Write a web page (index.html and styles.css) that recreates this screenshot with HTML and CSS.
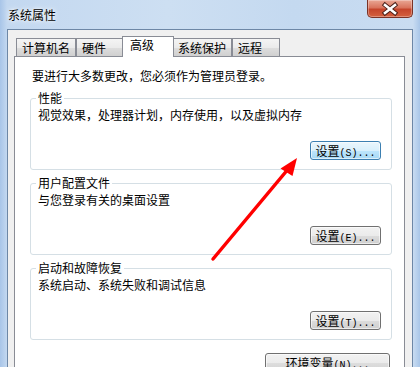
FILE: index.html
```html
<!DOCTYPE html>
<html lang="zh-CN">
<head>
<meta charset="UTF-8">
<meta name="viewport" content="width=device-width, initial-scale=1.0">
<title>系统属性</title>
<link rel="stylesheet" href="styles.css">
</head>
<body>
<div class="window">
  <div class="titlebar">
    <span class="title">系统属性</span>
    <div class="close">
      <svg width="44" height="18" viewBox="0 0 44 18">
        <path d="M17 5 L27 13 M27 5 L17 13" stroke="#4a1f18" stroke-width="4.5" stroke-linecap="square" fill="none"/>
        <path d="M17 5 L27 13 M27 5 L17 13" stroke="#fff" stroke-width="2.6" stroke-linecap="square" fill="none"/>
      </svg>
    </div>
  </div>
  <div class="dialog">
    <div class="tabs">
      <div class="tab">计算机名</div>
      <div class="tab">硬件</div>
      <div class="tab active">高级</div>
      <div class="tab">系统保护</div>
      <div class="tab">远程</div>
    </div>
    <div class="panel">
      <p class="intro">要进行大多数更改，您必须作为管理员登录。</p>
      <fieldset class="group">
        <legend>性能</legend>
        <p>视觉效果，处理器计划，内存使用，以及虚拟内存</p>
        <div class="actions"><button class="btn focused">设置<span class="key">(S)...</span></button></div>
      </fieldset>
      <fieldset class="group">
        <legend>用户配置文件</legend>
        <p>与您登录有关的桌面设置</p>
        <div class="actions"><button class="btn">设置<span class="key">(E)...</span></button></div>
      </fieldset>
      <fieldset class="group">
        <legend>启动和故障恢复</legend>
        <p>系统启动、系统失败和调试信息</p>
        <div class="actions"><button class="btn">设置<span class="key">(T)...</span></button></div>
      </fieldset>
      <div class="actions env"><button class="btn wide">环境变量<span class="key">(N)...</span></button></div>
    </div>
  </div>
  <!-- red annotation arrow drawn over the dialog -->
  <svg class="arrow" width="420" height="367" viewBox="0 0 420 367">
    <line x1="213" y1="259" x2="289" y2="168" stroke="#f00" stroke-width="3.5" stroke-linecap="round"/>
    <polygon points="297,158 280.5,168.5 292.5,176" fill="#f00"/>
  </svg>
</div>
</body>
</html>
```

FILE: styles.css
```css
html, body { margin: 0; padding: 0; height: 367px; overflow: hidden; }
body { font-family: "Noto Sans CJK SC", "Noto Sans", sans-serif; font-size: 12px; color: #000; }

.window { position: relative; height: 367px; box-sizing: border-box; padding: 0 7px; background: linear-gradient(90deg, #a8c5e8 0, #c3d8f0 7px, #cddff2 40%, #c4d9f0 70%, #c9dcf1 calc(100% - 7px), #a9c6e8 100%); }

.titlebar { height: 29px; display: flex; justify-content: space-between; align-items: flex-start; padding-left: 1px; }
.title { margin-top: 7px; line-height: 16px; text-shadow: 0 0 6px #fff, 0 0 3px #fff; }
.close { width: 46px; height: 18px; box-sizing: border-box; border: 1px solid #7a3226; border-top: none; border-radius: 0 0 5px 5px; background: linear-gradient(#e9a795, #d9745d 45%, #c5452c 55%, #d4603f); box-shadow: inset 0 0 0 1px rgba(255, 255, 255, 0.3); }
.close svg { display: block; }

.dialog { height: 338px; background: #f0f0f0; border: 1px solid #6d87a6; border-bottom: none; padding: 6px 7px 0 6px; }

.tabs { display: flex; align-items: flex-end; height: 20px; padding-left: 2px; }
.tab { height: 18px; min-width: 48px; box-sizing: border-box; border: 1px solid #898c95; border-bottom: none; padding: 0 5px; line-height: 17px; background: linear-gradient(#f4f4f4, #ebebeb 50%, #dedede 50%, #d0d0d0); white-space: nowrap; }
.tab.active { position: relative; z-index: 1; height: 21px; min-width: 52px; margin: 0 -2px -1px; padding: 0 7px; line-height: 16px; background: #fff; }

.panel { height: 300px; background: #fff; border: 1px solid #898c95; padding: 11px 12px 0 15px; }
.intro { margin: 0 0 0 2px; line-height: 16px; }

.group { margin: 7px 0 0; border: 1px solid #d5dfe5; border-radius: 3px; padding: 2px 10px 9px 7px; min-width: 0; }
.group + .group { margin-top: 6px; }
.group legend { padding: 0 2px; margin-left: -2px; line-height: 14px; }
.group p { margin: 0; line-height: 16px; }

.actions { display: flex; justify-content: flex-end; margin-top: 18px; }
.actions.env { margin-top: 13px; margin-right: 2px; }

.btn { width: 71px; height: 19px; padding: 0; font-family: inherit; font-size: 12px; line-height: 17px; color: #000; border: 1px solid #707070; border-radius: 3px; background: linear-gradient(#f2f2f2, #ebebeb 50%, #dddddd 50%, #cfcfcf); box-shadow: inset 0 0 0 1px rgba(255, 255, 255, 0.6); }
.btn.focused { border-color: #3c7fb1; background: linear-gradient(#eaf6fd, #d9f0fc 50%, #bee6fd 50%, #a7d9f5); }
.btn.wide { width: 125px; height: 21px; }
.key { font-family: "Liberation Mono", monospace; font-size: 10px; }

.arrow { position: absolute; top: 0; left: 0; pointer-events: none; }
```
